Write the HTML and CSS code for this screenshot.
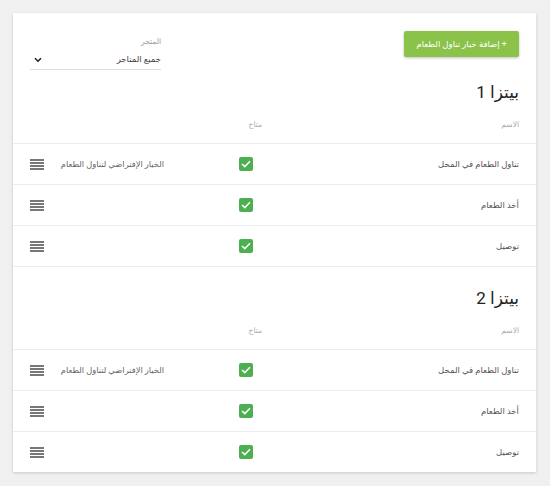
FILE: index.html
```html
<!DOCTYPE html>
<html lang="ar">
<head>
<meta charset="utf-8">
<link rel="stylesheet" href="styles.css">
</head>
<body>
<div class="card" dir="rtl">
  <div class="topbar">
    <button class="add-btn">+ إضافة خيار تناول الطعام</button>
    <div class="store">
      <div class="store-label">المتجر</div>
      <div class="store-field">
        <span>جميع المتاجر</span>
        <svg class="chev" width="8" height="6" viewBox="0 0 8 6"><path d="M1 1.2 L4 4.2 L7 1.2" fill="none" stroke="#222" stroke-width="1.6"/></svg>
      </div>
    </div>
  </div>

  <section class="section">
    <h2 class="heading">بيتزا 1</h2>
    <div class="grid head">
      <div>الاسم</div><div>متاح</div><div></div><div></div>
    </div>
    <div class="grid row">
      <div>تناول الطعام في المحل</div>
      <div><span class="check"><svg width="10" height="8" viewBox="0 0 10 8"><path d="M1 4 L3.8 6.6 L9 1.2" fill="none" stroke="#fff" stroke-width="1.5"/></svg></span></div>
      <div class="def">الخيار الإفتراضي لتناول الطعام</div>
      <div><span class="handle"><i></i><i></i><i></i><i></i></span></div>
    </div>
    <div class="grid row">
      <div>أخذ الطعام</div>
      <div><span class="check"><svg width="10" height="8" viewBox="0 0 10 8"><path d="M1 4 L3.8 6.6 L9 1.2" fill="none" stroke="#fff" stroke-width="1.5"/></svg></span></div>
      <div class="def"></div>
      <div><span class="handle"><i></i><i></i><i></i><i></i></span></div>
    </div>
    <div class="grid row">
      <div>توصيل</div>
      <div><span class="check"><svg width="10" height="8" viewBox="0 0 10 8"><path d="M1 4 L3.8 6.6 L9 1.2" fill="none" stroke="#fff" stroke-width="1.5"/></svg></span></div>
      <div class="def"></div>
      <div><span class="handle"><i></i><i></i><i></i><i></i></span></div>
    </div>
  </section>

  <section class="section">
    <h2 class="heading">بيتزا 2</h2>
    <div class="grid head">
      <div>الاسم</div><div>متاح</div><div></div><div></div>
    </div>
    <div class="grid row">
      <div>تناول الطعام في المحل</div>
      <div><span class="check"><svg width="10" height="8" viewBox="0 0 10 8"><path d="M1 4 L3.8 6.6 L9 1.2" fill="none" stroke="#fff" stroke-width="1.5"/></svg></span></div>
      <div class="def">الخيار الإفتراضي لتناول الطعام</div>
      <div><span class="handle"><i></i><i></i><i></i><i></i></span></div>
    </div>
    <div class="grid row">
      <div>أخذ الطعام</div>
      <div><span class="check"><svg width="10" height="8" viewBox="0 0 10 8"><path d="M1 4 L3.8 6.6 L9 1.2" fill="none" stroke="#fff" stroke-width="1.5"/></svg></span></div>
      <div class="def"></div>
      <div><span class="handle"><i></i><i></i><i></i><i></i></span></div>
    </div>
    <div class="grid row">
      <div>توصيل</div>
      <div><span class="check"><svg width="10" height="8" viewBox="0 0 10 8"><path d="M1 4 L3.8 6.6 L9 1.2" fill="none" stroke="#fff" stroke-width="1.5"/></svg></span></div>
      <div class="def"></div>
      <div><span class="handle"><i></i><i></i><i></i><i></i></span></div>
    </div>
  </section>
</div>
</body>
</html>
```

FILE: styles.css
```css
* { box-sizing: border-box; }
html, body { margin: 0; padding: 0; }
body {
  background: #f0f0f0;
  padding: 13px 14px 13px 13px;
  font-family: Roboto, "DejaVu Sans", sans-serif;
  color: #333;
}
.card {
  background: #fff;
  width: 523px;
  padding-top: 18px;
  box-shadow: 0 1px 3px rgba(0,0,0,0.16);
}
.topbar {
  display: flex;
  justify-content: space-between;
  align-items: flex-start;
  padding: 0 17px;
}
.add-btn {
  width: 115px;
  height: 26px;
  background: #8bc34a;
  color: #fff;
  border: none;
  border-radius: 2px;
  font-family: Roboto, "DejaVu Sans", sans-serif;
  font-size: 8.5px;
  padding: 0;
  box-shadow: 0 1px 3px rgba(0,0,0,0.25);
}
.store {
  width: 131px;
  margin-top: 5px;
}
.store-label {
  font-size: 7.5px;
  line-height: 12px;
  color: #999;
}
.store-field {
  display: flex;
  justify-content: space-between;
  align-items: center;
  height: 22px;
  border-bottom: 1px solid #ddd;
  font-size: 8.5px;
  color: #444;
  padding-left: 4px;
}
.chev { display: block; margin-top: 2px; }
.heading {
  margin: 10px 0 0;
  padding: 0 17px;
  font-size: 17px;
  line-height: 24px;
  font-weight: 400;
  color: #222;
}
.section + .section .heading { margin-top: 19px; }
.section:not(:last-child) { border-bottom: 1px solid #ececec; }
.grid {
  display: grid;
  grid-template-columns: 257px 98px 1fr 20px;
  padding: 0 17px;
  align-items: center;
}
.head {
  height: 39px;
  padding-top: 1px;
  font-size: 7.5px;
  color: #aaa;
}
.row {
  height: 41px;
  border-top: 1px solid #ececec;
  font-size: 8.5px;
  color: #555;
}
.check {
  display: flex;
  width: 14px;
  height: 14px;
  margin-right: 9px;
  background: #4db050;
  border-radius: 2px;
  align-items: center;
  justify-content: center;
}
.check svg { display: block; }
.def { font-size: 8.3px; color: #666; white-space: nowrap; }
.handle {
  display: flex;
  flex-direction: column;
  gap: 1px;
  width: 14px;
  margin-right: 6px;
}
.handle i {
  display: block;
  height: 2px;
  background: #777;
}
```
